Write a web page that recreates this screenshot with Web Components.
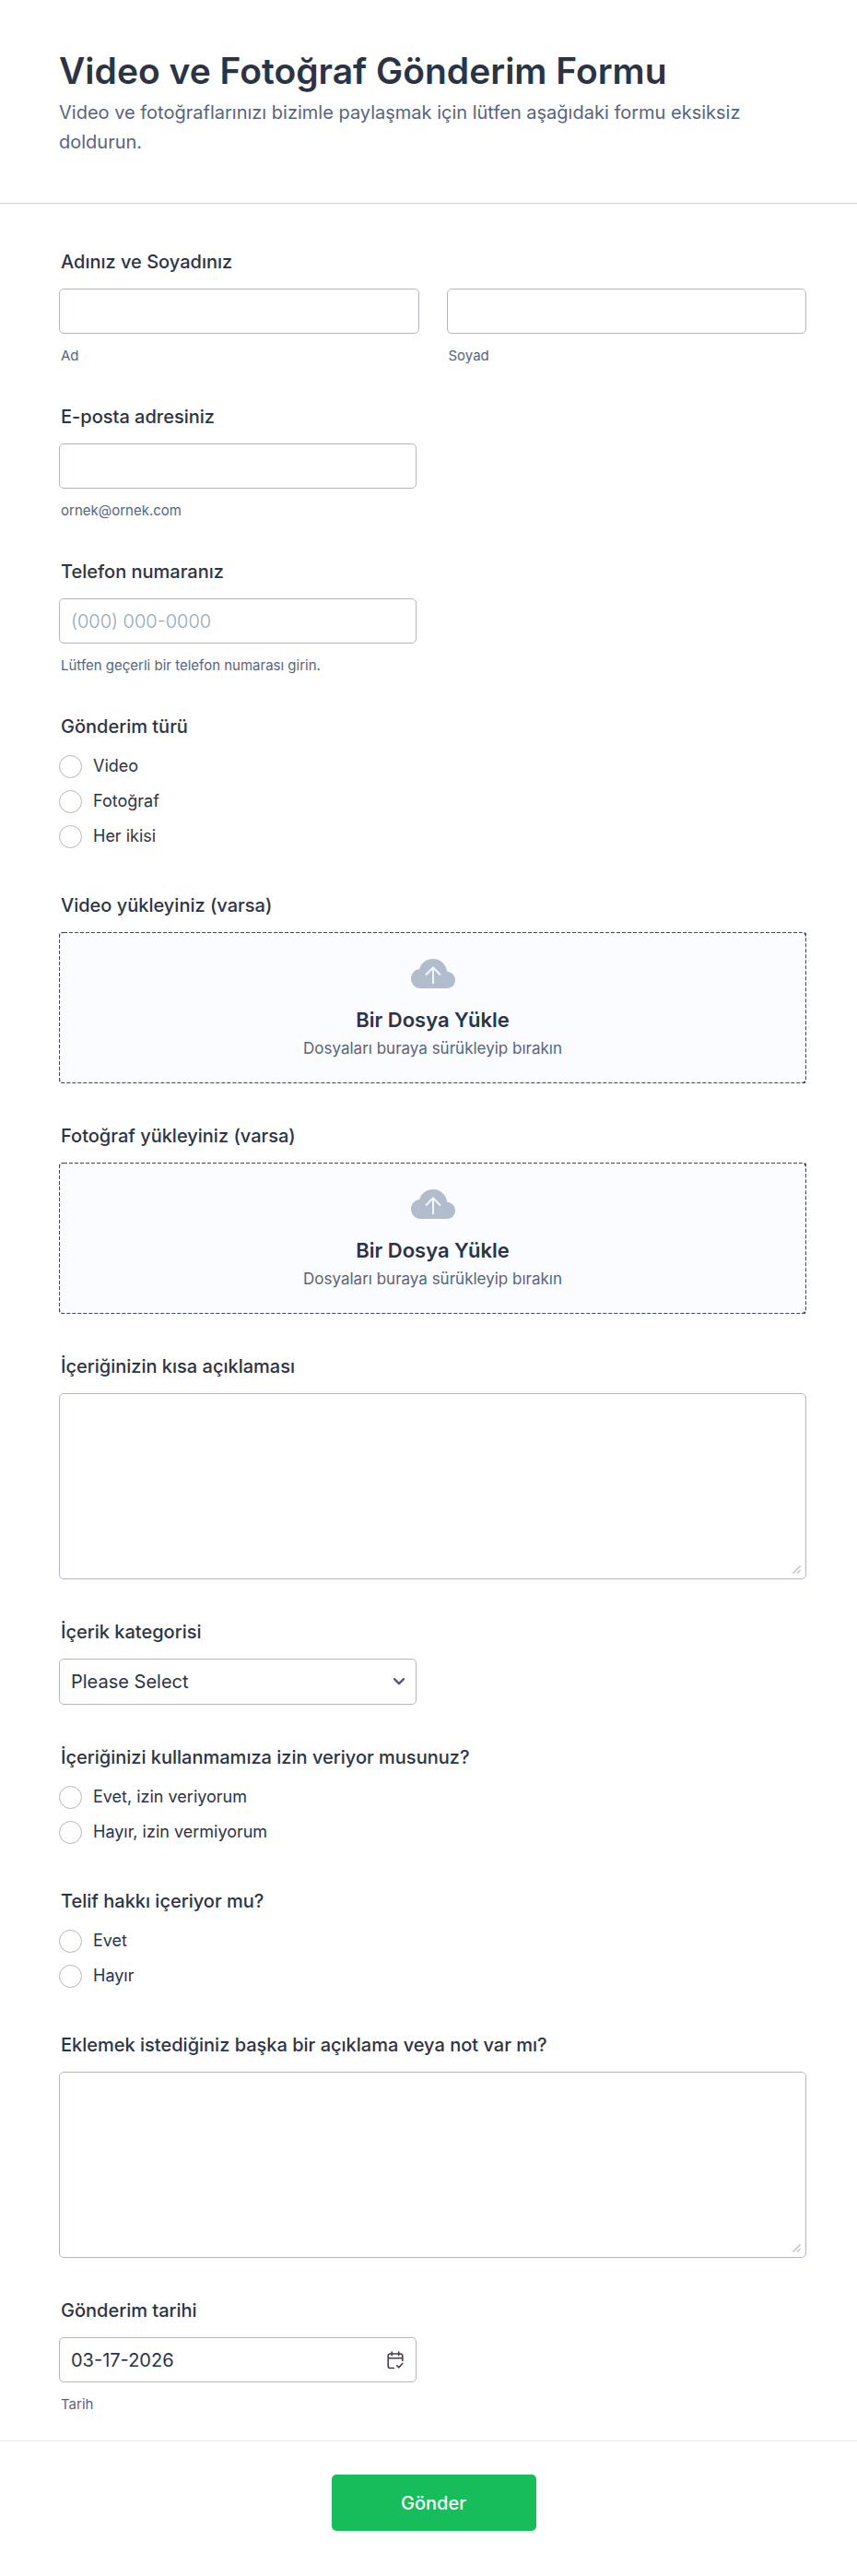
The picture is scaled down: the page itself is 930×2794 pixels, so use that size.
<!DOCTYPE html>
<html lang="tr">
<head>
<meta charset="utf-8">
<meta name="viewport" content="width=device-width, initial-scale=1">
<title>Video ve Fotoğraf Gönderim Formu</title>
<style>
  body {
    margin: 0;
    background: #fff;
    color: #2c3345;
    font-family: Inter, "Liberation Sans", sans-serif;
    --line: #b2b6c5;
    --muted: #57647e;
  }
</style>
</head>
<body>
<submission-form></submission-form>

<script>
const define = (name, html, setup) => {
  const template = document.createElement('template');
  template.innerHTML = html;
  customElements.define(name, class extends HTMLElement {
    constructor() {
      super();
      this.attachShadow({ mode: 'open' }).append(template.content.cloneNode(true));
    }
    connectedCallback() {
      if (setup && !this.ready) {
        this.ready = true;
        setup(this, this.shadowRoot);
      }
    }
  });
};

define('form-heading', `
  <style>
    :host { display: block; padding: 53px 64px 50px; border-bottom: 1px solid #d2d4de; }
    h1 { margin: 0; font-size: 39px; line-height: 48px; font-weight: 600; }
    p { margin: 5px 0 0; font-size: 20px; line-height: 32px; color: var(--muted); }
  </style>
  <h1><slot name="title"></slot></h1>
  <p><slot></slot></p>
`);

/* Label, control and optional hint. */
const controlStyles = `
  :host { display: block; min-width: 0; }
  .label { display: block; margin: 0 0 18px 2px; font-size: 20px; line-height: 22px; font-weight: 500; }
  .label[hidden] { display: none; }
  .hint { display: block; margin: 14px 0 0 2px; font-size: 15px; line-height: 19px; color: var(--muted); }
  .hint:empty { display: none; }
  .box { position: relative; }
  input, select, textarea {
    display: block; box-sizing: border-box; width: 100%; height: 49px; margin: 0; padding: 0 12px;
    border: 1px solid var(--line); border-radius: 5px; background: #fff; color: inherit;
    font-family: inherit; font-size: 20px; outline: 0; appearance: none;
  }
  :focus-visible { border-color: #2e69ff; }
`;
const copyLabel = (host, root) => {
  const label = root.querySelector('.label');
  label.textContent = host.getAttribute('label') || '';
};

define('text-field', `
  <style>
    ${controlStyles}
    .box { max-width: 388px; }
    :host([wide]) .box { max-width: none; }
    input::placeholder { color: #95a9b5; opacity: 1; font-weight: 300; }
  </style>
  <label class="label" for="control"></label>
  <div class="box"><input id="control" aria-describedby="hint"><slot></slot></div>
  <label class="hint" id="hint" for="control"></label>
`, (host, root) => {
  copyLabel(host, root);
  const input = root.querySelector('input');
  root.querySelector('.label').hidden = !host.hasAttribute('label');
  root.querySelector('.hint').textContent = host.getAttribute('hint') || '';
  input.type = host.getAttribute('type') || 'text';
  input.placeholder = host.getAttribute('placeholder') || '';
  input.value = host.getAttribute('value') || '';
});

define('calendar-icon', `
  <style>
    :host { position: absolute; right: 14px; top: 15px; width: 18px; height: 20px; pointer-events: none; }
    svg { display: block; }
  </style>
  <svg width="18" height="20" viewBox="0 0 18 20" fill="none" stroke="#4c3a4b" stroke-width="1.6" stroke-linecap="round" stroke-linejoin="round" aria-hidden="true">
    <path d="M7.500 18.500H3.500Q1.200 18.500 1.200 16.200V5.300Q1.200 3 3.500 3H14.500Q16.800 3 16.800 5.300V10.500M1.200 7.800H16.800M5.300 1V4.700M12.700 1V4.700M10.800 15.800L13 17.800L16.800 13.500"/>
  </svg>
`);

define('name-field', `
  <style>
    :host { display: block; }
    fieldset { margin: 0; padding: 0; border: 0; min-width: 0; }
    legend { padding: 0; margin: 0 0 18px 2px; font-size: 20px; line-height: 22px; font-weight: 500; }
    .pair { display: grid; grid-template-columns: 1fr 1fr; gap: 30px; }
  </style>
  <fieldset><legend></legend><div class="pair"><slot></slot></div></fieldset>
`, (host, root) => { root.querySelector('legend').textContent = host.getAttribute('label'); });

define('text-area', `
  <style>
    ${controlStyles}
    textarea { height: 202px; padding: 12px; resize: vertical; }
    textarea::-webkit-resizer { display: none; }
    svg { position: absolute; right: 6px; bottom: 6px; pointer-events: none; }
  </style>
  <label class="label" for="control"></label>
  <div class="box">
    <textarea id="control"></textarea>
    <svg width="9" height="9" viewBox="0 0 9 9" stroke="#b8bdc9" stroke-width="1.4" aria-hidden="true"><path d="M.5 8.500L8.500 .5M5 8.500L8.500 5"/></svg>
  </div>
`, copyLabel);

define('choice-select', `
  <style>
    ${controlStyles}
    .box { max-width: 388px; }
    select { height: 50px; }
    svg { position: absolute; right: 12px; top: 20px; pointer-events: none; }
  </style>
  <label class="label" for="control"></label>
  <div class="box">
    <select id="control"><option>Please Select</option></select>
    <svg width="14" height="10" viewBox="0 0 14 10" fill="none" stroke="#535c7a" stroke-width="2.400" stroke-linecap="round" stroke-linejoin="round" aria-hidden="true"><path d="M2 2.200L7 7.200L12 2.200"/></svg>
  </div>
`, copyLabel);

define('radio-group', `
  <style>
    :host { display: block; }
    fieldset { margin: 0; padding: 0; border: 0; min-width: 0; }
    legend { padding: 0; margin: 0 0 18px 2px; font-size: 20px; line-height: 22px; font-weight: 500; }
    .list { display: grid; gap: 14px; padding: 2px 0 6px; justify-items: start; }
    label { display: flex; align-items: center; gap: 12px; font-size: 18px; line-height: 24px; }
    input { appearance: none; flex: none; box-sizing: border-box; width: 25px; height: 25px; margin: 0 0 -1px; border: 1px solid var(--line); border-radius: 50%; background: #fff; }
    input:checked { border: 7px solid #2e69ff; }
  </style>
  <fieldset><legend></legend><div class="list"></div></fieldset>
`, (host, root) => {
  root.querySelector('legend').textContent = host.getAttribute('label');
  for (const text of host.getAttribute('options').split('|')) {
    const label = document.createElement('label');
    const input = document.createElement('input');
    input.type = 'radio';
    input.name = 'choice';
    label.append(input, text);
    root.querySelector('.list').append(label);
  }
});

define('file-drop', `
  <style>
    ${controlStyles}
    button {
      position: relative; display: flex; flex-direction: column; align-items: center; box-sizing: border-box;
      width: 100%; min-height: 164px; margin: 0; padding: 28px 16px 20px;
      border: 0; border-radius: 5px; background: #fafcff;
      color: inherit; font-family: inherit; cursor: pointer;
    }
    svg { display: block; flex: none; }
    /* Half of the 2px stroke is clipped, which leaves a 1px dashed edge. */
    .edge { position: absolute; inset: 0; width: 100%; height: 100%; overflow: hidden; pointer-events: none; }
    strong { margin-top: 19px; font-size: 22px; line-height: 28px; font-weight: 600; }
    small { margin-top: 5px; font-size: 17px; line-height: 24px; color: var(--muted); }
  </style>
  <label class="label" for="control"></label>
  <button id="control" type="button">
    <svg class="edge" aria-hidden="true"><rect width="100%" height="100%" rx="5" fill="none" stroke="#3f465a" stroke-width="2" stroke-dasharray="4 2"/></svg>
    <svg width="48" height="34" viewBox="0 0 48 34" aria-hidden="true">
      <path fill="#b1bccd" d="M10.500 33C4.700 33 0 28.200 0 22.500C0 17 4 12.600 9.200 12C11 5.500 16.900 1 24 1C31.800 1 38.300 7 39.200 14.700C44.100 15 48 19 48 24C48 29 44 33 39 33Z"/>
      <path d="M24 28V11M16 18.500L24 10.500L32 18.500" fill="none" stroke="#f3f7fc" stroke-width="2"/>
    </svg>
    <strong>Bir Dosya Yükle</strong>
    <small>Dosyaları buraya sürükleyip bırakın</small>
  </button>
`, copyLabel);

define('form-footer', `
  <style>
    :host { display: flex; justify-content: center; padding: 36px 53px 49px 64px; border-top: 1px solid #e8e8ef; }
    button { min-width: 222px; height: 61px; padding: 0 24px; border: 0; border-radius: 5px; background: #18bd5b; color: #fff; font-family: inherit; font-size: 20px; font-weight: 500; cursor: pointer; }
  </style>
  <button type="submit"><slot></slot></button>
`);

define('submission-form', `
  <style>
    :host { display: block; }
    .fields { display: grid; gap: 46px; padding: 52px 55px 30px 64px; }
  </style>
  <form>
    <form-heading><span slot="title">Video ve Fotoğraf Gönderim Formu</span>Video ve fotoğraflarınızı bizimle paylaşmak için lütfen aşağıdaki formu eksiksiz doldurun.</form-heading>
    <div class="fields">
      <name-field label="Adınız ve Soyadınız">
        <text-field wide hint="Ad"></text-field>
        <text-field wide hint="Soyad"></text-field>
      </name-field>
      <text-field label="E-posta adresiniz" type="email" hint="ornek@ornek.com"></text-field>
      <text-field label="Telefon numaranız" type="tel" placeholder="(000) 000-0000" hint="Lütfen geçerli bir telefon numarası girin."></text-field>
      <radio-group label="Gönderim türü" options="Video|Fotoğraf|Her ikisi"></radio-group>
      <file-drop label="Video yükleyiniz (varsa)"></file-drop>
      <file-drop label="Fotoğraf yükleyiniz (varsa)"></file-drop>
      <text-area label="İçeriğinizin kısa açıklaması"></text-area>
      <choice-select label="İçerik kategorisi"></choice-select>
      <radio-group label="İçeriğinizi kullanmamıza izin veriyor musunuz?" options="Evet, izin veriyorum|Hayır, izin vermiyorum"></radio-group>
      <radio-group label="Telif hakkı içeriyor mu?" options="Evet|Hayır"></radio-group>
      <text-area label="Eklemek istediğiniz başka bir açıklama veya not var mı?"></text-area>
      <text-field label="Gönderim tarihi" value="03-17-2026" hint="Tarih"><calendar-icon></calendar-icon></text-field>
    </div>
    <form-footer>Gönder</form-footer>
  </form>
`);
</script>
</body>
</html>
